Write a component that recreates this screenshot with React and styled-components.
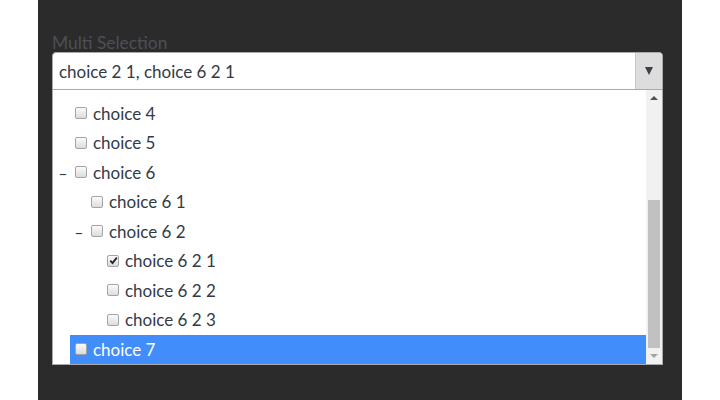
import React from "react";
import styled, { createGlobalStyle } from "styled-components";

const Global = createGlobalStyle`
  html, body { margin: 0; padding: 0; background: #ffffff; }
  body { font-family: Lato, "Open Sans", sans-serif; }
`;

const Panel = styled.div`
  margin-left: 38px;
  width: 644px;
  height: 400px;
  box-sizing: border-box;
  background: #2b2b2b;
  padding: 33px 19px 0 14px;
`;

const Label = styled.div`
  font-size: 17.4px;
  line-height: 19px;
  color: #4b5057;
`;

const SelectBox = styled.div`
  display: flex;
  height: 38px;
  box-sizing: border-box;
  background: #fff;
  border: 1px solid #aaaaaa;
  border-radius: 4px 4px 0 0;
  overflow: hidden;
`;

const Value = styled.div`
  flex: 1;
  display: flex;
  align-items: center;
  padding-left: 6px;
  font-size: 17px;
  color: #333a45;
`;

const ArrowBox = styled.div`
  width: 26px;
  display: flex;
  align-items: center;
  justify-content: center;
  background: #dddddd;
  border-left: 1px solid #c8c8c8;
`;

const Tri = styled.span`
  width: 0;
  height: 0;
  border-left: ${(p) => p.$w}px solid transparent;
  border-right: ${(p) => p.$w}px solid transparent;
  ${(p) => (p.$up ? "border-bottom" : "border-top")}: ${(p) => p.$h}px solid ${(p) => p.$color};
`;

const Dropdown = styled.div`
  display: flex;
  height: 275px;
  box-sizing: border-box;
  background: #fff;
  border: 1px solid #a9a9a9;
  border-top: none;
`;

const List = styled.div`
  flex: 1;
  overflow: hidden;
  display: flex;
  flex-direction: column;
  justify-content: flex-end;
`;

const Row = styled.div`
  flex: none;
  display: flex;
  height: 29.5px;
  padding-left: ${(p) => p.$depth * 16}px;
  font-size: 17px;
`;

const Toggle = styled.span`
  width: 17px;
  flex: none;
  display: flex;
  align-items: center;
  justify-content: center;
  color: #333a45;
  font-size: 16px;
  padding-left: 3px;
  box-sizing: border-box;
`;

const Item = styled.div`
  flex: 1;
  display: flex;
  align-items: center;
  gap: 6px;
  padding-left: 5px;
  background: ${(p) => (p.$active ? "#418dfb" : "transparent")};
  color: ${(p) => (p.$active ? "#ffffff" : "#333a45")};
`;

const Check = styled.span`
  width: 12px;
  height: 12px;
  flex: none;
  box-sizing: border-box;
  border: 1px solid #a4a4a4;
  border-radius: 2px;
  background: linear-gradient(#fbfbfb, #dcdcdc);
  display: flex;
  align-items: center;
  justify-content: center;
`;

const Scrollbar = styled.div`
  width: 16px;
  flex: none;
  background: #f1f1f1;
  display: flex;
  flex-direction: column;
`;

const ScrollButton = styled.div`
  height: 16px;
  flex: none;
  display: flex;
  align-items: center;
  justify-content: center;
`;

const Track = styled.div`
  flex: 1;
  display: flex;
  flex-direction: column;
  justify-content: flex-end;
  padding: 0 2px;
`;

const Thumb = styled.div`
  height: 148px;
  background: #c1c1c1;
`;

const items = [
  { label: "choice 4", depth: 0 },
  { label: "choice 5", depth: 0 },
  { label: "choice 6", depth: 0, open: true },
  { label: "choice 6 1", depth: 1 },
  { label: "choice 6 2", depth: 1, open: true },
  { label: "choice 6 2 1", depth: 2, checked: true },
  { label: "choice 6 2 2", depth: 2 },
  { label: "choice 6 2 3", depth: 2 },
  { label: "choice 7", depth: 0, active: true },
];

export default function App() {
  return (
    <>
      <Global />
      <Panel>
        <Label>Multi Selection</Label>
        <SelectBox>
          <Value>choice 2 1, choice 6 2 1</Value>
          <ArrowBox>
            <Tri $w={4} $h={8} $color="#3a3f48" />
          </ArrowBox>
        </SelectBox>
        <Dropdown>
          <List>
            {items.map((it) => (
              <Row key={it.label} $depth={it.depth}>
                <Toggle>{it.open ? "–" : ""}</Toggle>
                <Item $active={it.active}>
                  <Check>
                    {it.checked && (
                      <svg width="9" height="9" viewBox="0 0 9 9">
                        <path d="M1.3 4.6 L3.5 7 L7.8 1.6" fill="none" stroke="#222" strokeWidth="1.8" />
                      </svg>
                    )}
                  </Check>
                  <span>{it.label}</span>
                </Item>
              </Row>
            ))}
          </List>
          <Scrollbar>
            <ScrollButton>
              <Tri $up $w={4} $h={4} $color="#505050" />
            </ScrollButton>
            <Track>
              <Thumb />
            </Track>
            <ScrollButton>
              <Tri $w={4} $h={4} $color="#a3a3a3" />
            </ScrollButton>
          </Scrollbar>
        </Dropdown>
      </Panel>
    </>
  );
}
